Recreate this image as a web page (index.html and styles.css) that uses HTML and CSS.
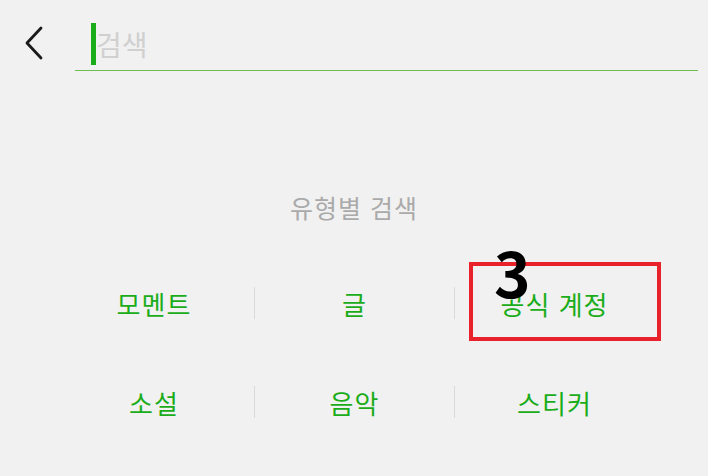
FILE: index.html
```html
<!DOCTYPE html>
<html lang="ko">
<head>
  <meta charset="UTF-8">
  <meta name="viewport" content="width=device-width, initial-scale=1.0">
  <title>검색</title>
  <link rel="stylesheet" href="styles.css">
</head>
<body>
  <div class="header">
    <div class="back-btn">
      <svg width="20" height="34" viewBox="0 0 20 34">
        <polyline points="17,2 3,17 17,32" fill="none" stroke="#1a1a1a" stroke-width="2.8" stroke-linecap="round" stroke-linejoin="round"/>
      </svg>
    </div>
    <div class="search-box">
      <span class="caret"></span>
      <span class="placeholder">검색</span>
    </div>
  </div>

  <div class="category">
    <p class="category-title">유형별 검색</p>
    <div class="category-grid">
      <div class="cell"><span>모멘트</span></div>
      <div class="cell divided"><span>글</span></div>
      <div class="cell divided"><span>공식 계정</span></div>
      <div class="cell"><span>소설</span></div>
      <div class="cell divided"><span>음악</span></div>
      <div class="cell divided"><span>스티커</span></div>
    </div>
  </div>

  <!-- annotation overlay -->
  <div class="mark-box"></div>
  <div class="mark-num">3</div>
</body>
</html>
```

FILE: styles.css
```css
body {
  margin: 0;
  padding: 0;
  background-color: #f1f1f1;
  font-family: "Noto Sans CJK KR", "Noto Sans", sans-serif;
  width: 708px;
  height: 476px;
  overflow: hidden;
  position: relative;
}

.header {
  display: flex;
  align-items: flex-end;
  height: 70px;
}

.back-btn {
  width: 75px;
  height: 52px;
  display: flex;
  align-items: center;
  padding-left: 24px;
  box-sizing: border-box;
  margin-bottom: 1px;
}

.search-box {
  flex: 1;
  margin-right: 10px;
  height: 53px;
  border-bottom: 1px solid #6cbf4e;
  display: flex;
  align-items: center;
  padding-left: 16px;
  margin-bottom: -1px;
}

.caret {
  display: inline-block;
  width: 5px;
  height: 42px;
  background-color: #1aad19;
}

.placeholder {
  color: #d0d0d0;
  font-size: 28px;
  line-height: 42px;
}

.category {
  width: 600px;
  margin: 0 auto;
  padding-top: 122px;
}

.category-title {
  margin: 0;
  text-align: center;
  color: #aaaaaa;
  font-size: 25px;
  letter-spacing: 1px;
  line-height: 30px;
}

.category-grid {
  display: grid;
  grid-template-columns: repeat(3, 1fr);
  row-gap: 67px;
  margin-top: 65px;
}

.cell {
  height: 32px;
  display: flex;
  align-items: center;
  justify-content: center;
  color: #1aad19;
  font-size: 26px;
  letter-spacing: 1px;
}

.cell.divided {
  border-left: 1px solid #dadada;
}

.mark-box {
  position: absolute;
  left: 469px;
  top: 262px;
  width: 184px;
  height: 71px;
  border: 4px solid #e8212b;
}

.mark-num {
  position: absolute;
  left: 494px;
  top: 236px;
  font-family: "Noto Sans CJK KR", sans-serif;
  font-weight: bold;
  font-size: 62px;
  line-height: 70px;
  color: #000;
}
```
